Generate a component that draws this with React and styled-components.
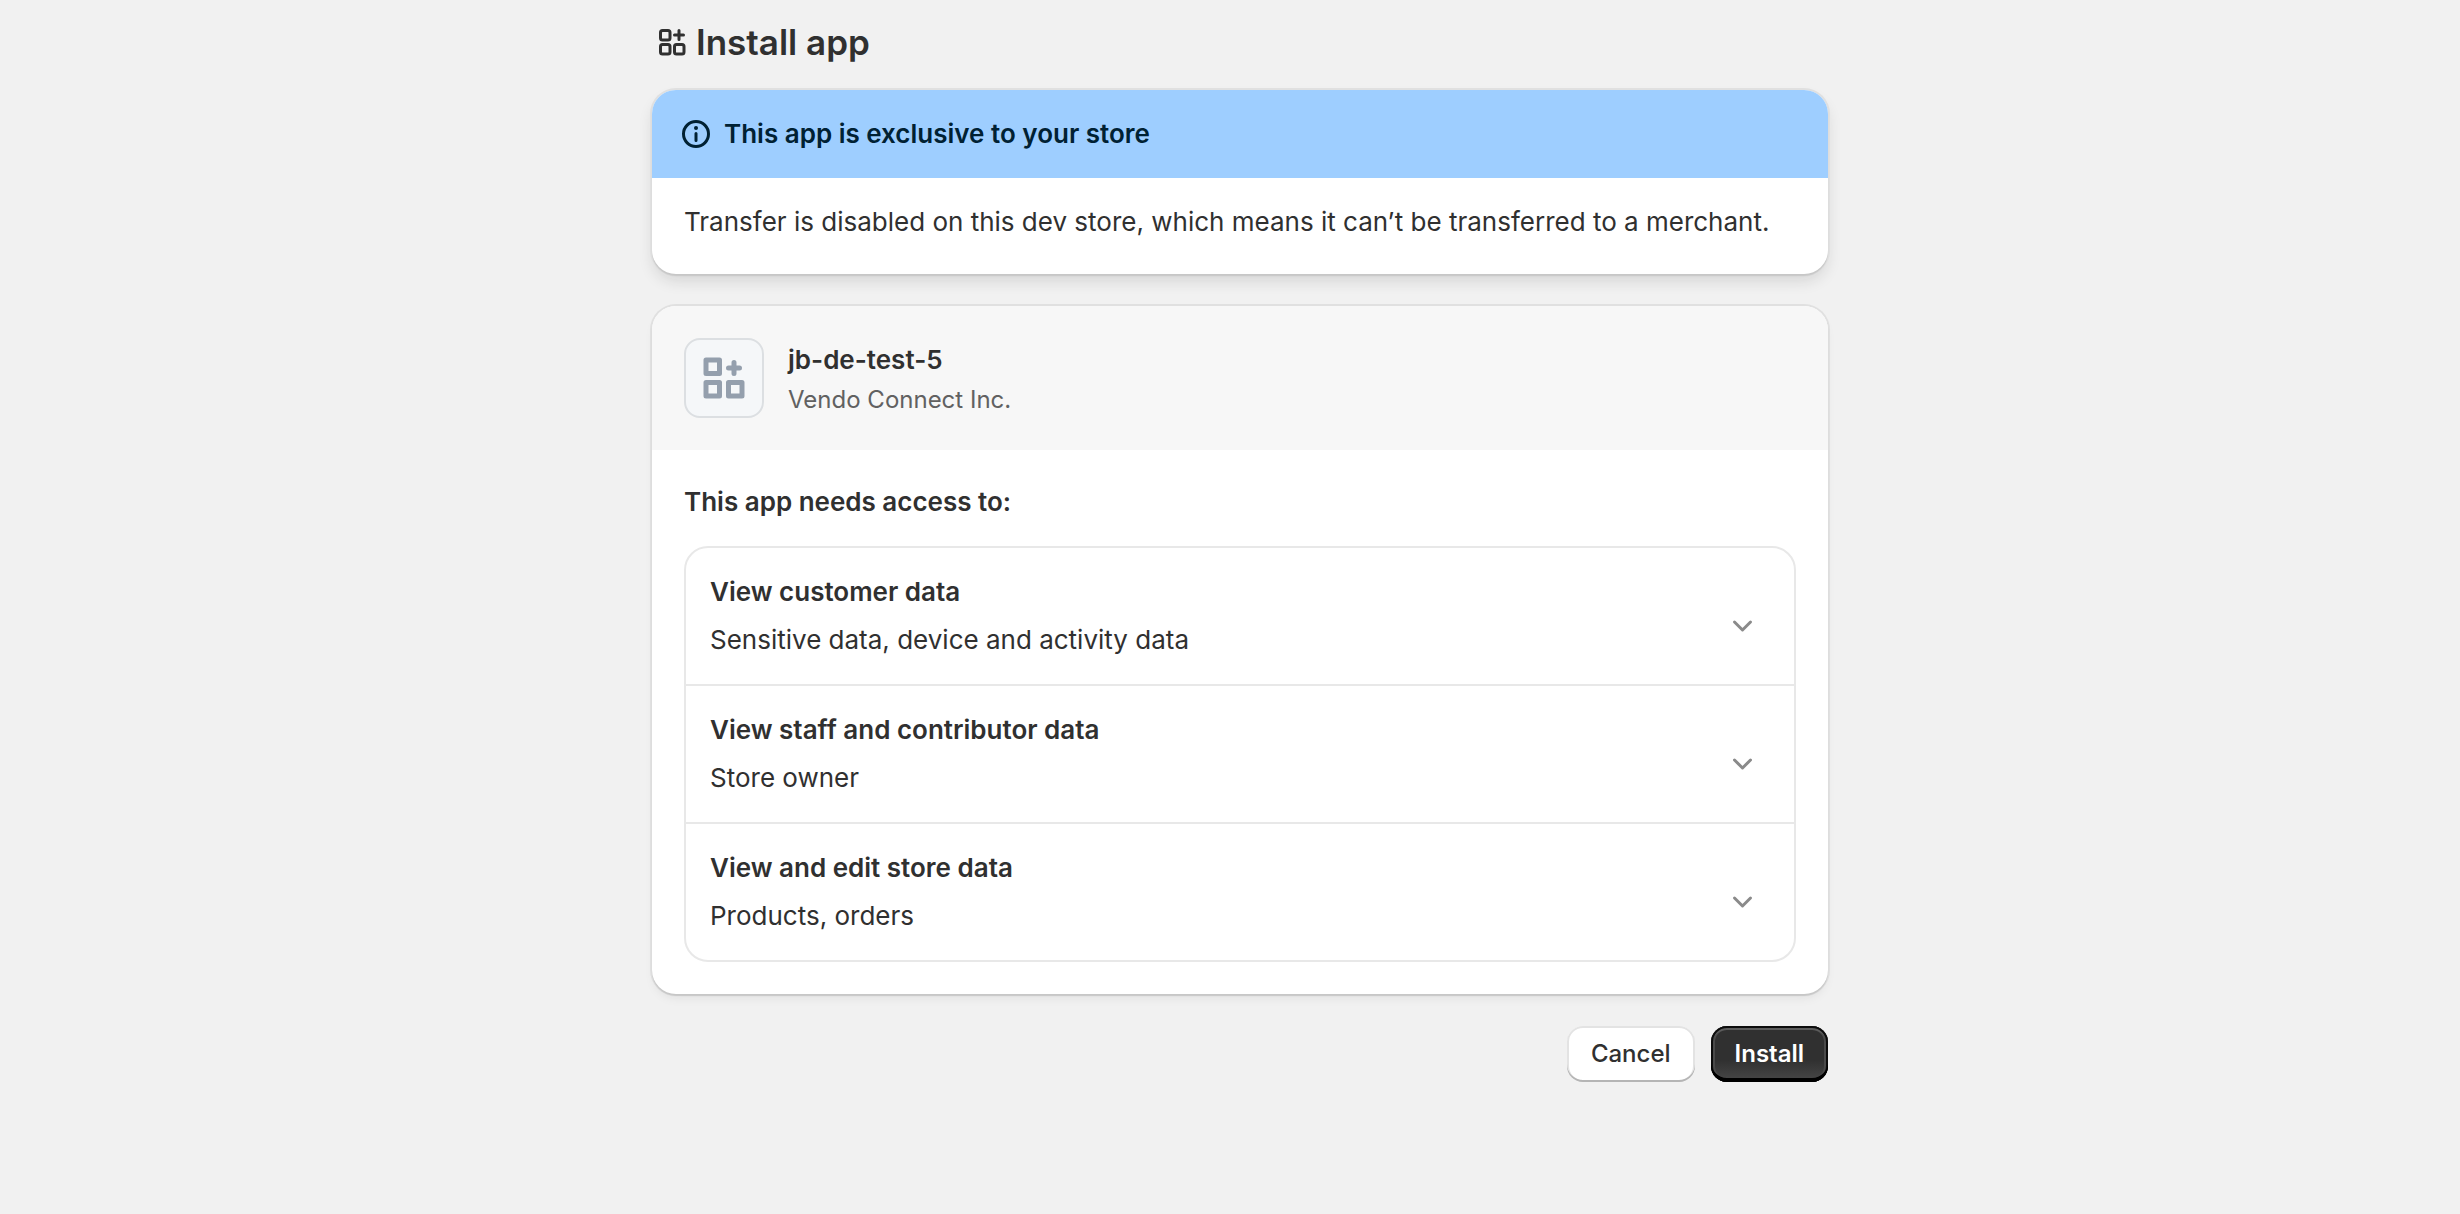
import { useState } from "react";
import styled, { createGlobalStyle } from "styled-components";

const GlobalStyle = createGlobalStyle`
    body {
        margin: 0;
        background: #f1f1f1;
        color: #303030;
        font-family: Inter, sans-serif;
        font-size: 26px;
        font-weight: 425;
        line-height: 40px;
    }

    h1, h2, h3, p, ul {
        margin: 0;
        padding: 0;
    }
`;

const Page = styled.main`
    display: flex;
    flex-direction: column;
    max-width: 1176px;
    margin: 0 auto;
    padding: 18px 0 64px 20px;
`;

const TitleBar = styled.header`
    display: flex;
    align-items: center;
    gap: 4px;
    margin-bottom: 24px;
`;

const Title = styled.h1`
    font-size: 35px;
    font-weight: 620;
    line-height: 48px;
`;

const Icon = styled.svg`
    flex: none;
    width: 40px;
    height: 40px;
    fill: currentColor;
`;

const Card = styled.section`
    margin-bottom: 32px;
    background: #fff;
    border-radius: 24px;
    overflow: hidden;
    box-shadow: 0 2px 1px rgba(26, 26, 26, 0.12), 0 0 0 2px #e0e0e0,
        ${(props) => (props.$raised ? "0 8px 16px -2px rgba(26, 26, 26, 0.14)" : "0 6px 12px -4px rgba(26, 26, 26, 0.1)")};
`;

const BannerHeader = styled.div`
    display: flex;
    align-items: center;
    gap: 8px;
    padding: 24px;
    background: #9eceff;
    color: #002133;
`;

const BannerBody = styled.p`
    padding: 24px 32px 32px;
`;

const Heading = styled.h2`
    font-size: 26px;
    font-weight: 600;
    line-height: 40px;
`;

const AppHeader = styled.div`
    display: flex;
    align-items: center;
    gap: 24px;
    padding: 32px;
    background: #f7f7f7;
`;

const AppLogo = styled.div`
    display: flex;
    box-sizing: border-box;
    width: 80px;
    height: 80px;
    border: 2px solid #dcdfe2;
    border-radius: 16px;
    background: #f5f7f9;
    overflow: hidden;

    svg {
        width: 100%;
        height: 100%;
    }
`;

const AppInfo = styled.div`
    display: flex;
    flex-direction: column;
    gap: 4px;
`;

const Developer = styled.p`
    color: #616161;
    font-size: 24px;
    line-height: 32px;
`;

const CardBody = styled.div`
    display: flex;
    flex-direction: column;
    gap: 24px;
    padding: 32px;
`;

const ScopeList = styled.ul`
    list-style: none;
    border: 2px solid #e8e8e8;
    border-radius: 24px;
    overflow: hidden;
`;

const ScopeItem = styled.li`
    & + & {
        border-top: 2px solid #e8e8e8;
    }
`;

const ScopeButton = styled.button`
    display: flex;
    align-items: center;
    justify-content: space-between;
    width: 100%;
    padding: 24px 32px 24px 24px;
    border: none;
    background: none;
    color: inherit;
    font: inherit;
    text-align: left;
    cursor: pointer;

    &:hover {
        background: #fafafa;
    }
`;

const ScopeText = styled.span`
    display: flex;
    flex-direction: column;
    gap: 8px;
`;

const ScopeTitle = styled.span`
    font-weight: 600;
`;

const Chevron = styled(Icon)`
    margin-top: 16px;
    color: #8a8a8a;
    transform: ${(props) => (props.$open ? "rotate(180deg)" : "none")};
`;

const Actions = styled.div`
    display: flex;
    justify-content: flex-end;
    gap: 16px;
`;

const Button = styled.button`
    padding: 12px 24px;
    border: none;
    border-radius: 16px;
    background: #fff;
    color: #303030;
    font-family: inherit;
    font-size: 24px;
    font-weight: 550;
    line-height: 32px;
    cursor: pointer;
    box-shadow: inset 0 -2px 0 #b5b5b5, inset 0 0 0 2px #e3e3e3;
`;

const PrimaryButton = styled(Button)`
    background: linear-gradient(#303030 60%, #484848);
    color: #fff;
    font-weight: 600;
    box-shadow: inset 0 -4px 0 #000, inset 0 0 0 2px #0c0c0c, inset 0 4px 0 #5c5c5c, inset 0 0 0 4px #4a4a4a;
`;

const scopes = [
    { id: "customer", title: "View customer data", summary: "Sensitive data, device and activity data" },
    { id: "staff", title: "View staff and contributor data", summary: "Store owner" },
    { id: "store", title: "View and edit store data", summary: "Products, orders" },
];

const AppsIcon = () => (
    <Icon viewBox="0 0 40 40" aria-hidden="true">
        <g fill="none" stroke="currentColor" strokeWidth="3">
            <rect x="8.5" y="8.5" width="9.5" height="9.5" rx="2" />
            <rect x="8.5" y="22.5" width="9.5" height="9.5" rx="2" />
            <rect x="22.5" y="22.5" width="9.5" height="9.5" rx="2" />
            <path d="M27 8.5v9M22.5 13h9" strokeLinecap="round" />
        </g>
    </Icon>
);

const InfoIcon = () => (
    <Icon viewBox="0 0 20 20" aria-hidden="true">
        <path d="M10 14a.75.75 0 0 1-.75-.75v-3.5a.75.75 0 0 1 1.5 0v3.5a.75.75 0 0 1-.75.75Z" />
        <path d="M9 7a1 1 0 1 1 2 0 1 1 0 0 1-2 0Z" />
        <path fillRule="evenodd" d="M17 10a7 7 0 1 1-14 0 7 7 0 0 1 14 0Zm-1.5 0a5.5 5.5 0 1 1-11 0 5.5 5.5 0 0 1 11 0Z" />
    </Icon>
);

const Scope = ({ scope }) => {
    const [open, setOpen] = useState(false);

    return (
        <ScopeItem>
            <ScopeButton type="button" aria-expanded={open} onClick={() => setOpen(!open)}>
                <ScopeText>
                    <ScopeTitle>{scope.title}</ScopeTitle>
                    <span>{scope.summary}</span>
                </ScopeText>
                <Chevron viewBox="0 0 40 40" $open={open} aria-hidden="true">
                    <path d="M12.5 18l8 8 8-8" fill="none" stroke="currentColor" strokeWidth="3" strokeLinecap="round" strokeLinejoin="round" />
                </Chevron>
            </ScopeButton>
        </ScopeItem>
    );
};

const App = () => {
    return (
        <>
            <GlobalStyle />
            <Page>
                <TitleBar>
                    <AppsIcon />
                    <Title>Install app</Title>
                </TitleBar>
                <Card $raised>
                    <BannerHeader>
                        <InfoIcon />
                        <Heading>This app is exclusive to your store</Heading>
                    </BannerHeader>
                    <BannerBody>
                        Transfer is disabled on this dev store, which means it can’t be transferred to a merchant.
                    </BannerBody>
                </Card>
                <Card>
                    <AppHeader>
                        <AppLogo>
                            <svg viewBox="0 0 76 76" aria-hidden="true">
                                <g fill="none" stroke="#949fad" strokeWidth="5" strokeLinejoin="round">
                                    <rect x="20" y="20" width="13.5" height="13.5" />
                                    <rect x="20" y="42.5" width="13.5" height="13.5" />
                                    <rect x="42.5" y="42.5" width="13.5" height="13.5" />
                                    <path d="M48 22.5v11M42.5 28h11" strokeLinecap="round" />
                                </g>
                            </svg>
                        </AppLogo>
                        <AppInfo>
                            <Heading>jb-de-test-5</Heading>
                            <Developer>Vendo Connect Inc.</Developer>
                        </AppInfo>
                    </AppHeader>
                    <CardBody>
                        <Heading>This app needs access to:</Heading>
                        <ScopeList>
                            {scopes.map((scope) => (
                                <Scope key={scope.id} scope={scope} />
                            ))}
                        </ScopeList>
                    </CardBody>
                </Card>
                <Actions>
                    <Button type="button">Cancel</Button>
                    <PrimaryButton type="button">Install</PrimaryButton>
                </Actions>
            </Page>
        </>
    );
};

export default App;
